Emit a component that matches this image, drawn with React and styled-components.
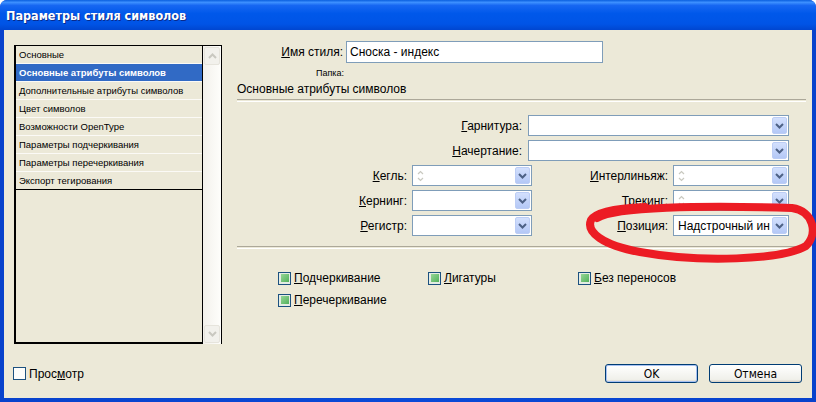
import React from "react";
import styled, { createGlobalStyle } from "styled-components";

const GlobalStyle = createGlobalStyle`
  html, body {
    margin: 0;
    padding: 0;
    background: #ffffff;
  }
  body {
    font-family: "Liberation Sans", Arial, sans-serif;
    font-size: 12px;
    color: #000;
  }
`;

const Window = styled.div`
  position: relative;
  width: 816px;
  height: 402px;
  display: flex;
  flex-direction: column;
  background: #0a3fd1;
  border-radius: 7px 7px 0 0;
  overflow: hidden;
`;

const TitleBar = styled.div`
  height: 30px;
  flex: none;
  display: flex;
  align-items: center;
  padding-left: 6px;
  background: linear-gradient(
    to bottom,
    #0a5fdf 0%,
    #3d90ff 8%,
    #1767f2 18%,
    #0058ea 45%,
    #0054e6 80%,
    #0046d0 100%
  );
  color: #fff;
  font-family: "DejaVu Sans Condensed", "Liberation Sans", sans-serif;
  font-weight: bold;
  font-size: 12.5px;
  text-shadow: 1px 1px 0 #0a2a8a;
`;

const Frame = styled.div`
  flex: 1;
  display: flex;
  padding: 0 4px 4px 4px;
  background: linear-gradient(to right, #0842cc, #0a4ad8 50%, #0842cc);
`;

const Content = styled.div`
  flex: 1;
  display: flex;
  flex-direction: column;
  background: #ece9d8;
`;

const Main = styled.div`
  height: 313px;
  display: flex;
`;

/* ---------- left list ---------- */

const ListPanel = styled.div`
  margin: 15px 0 0 10px;
  width: 208px;
  height: 299px;
  box-sizing: border-box;
  display: flex;
  border-top: 1px solid #000;
  border-left: 2px solid #000;
`;

const List = styled.div`
  width: 187px;
  display: flex;
  flex-direction: column;
  border-right: 1px solid #000;
  border-bottom: 2px solid #000;
`;

const ListItem = styled.div`
  height: 18px;
  box-sizing: border-box;
  display: flex;
  align-items: center;
  padding-left: 3px;
  font-size: 9.5px;
  white-space: nowrap;
  border-bottom: 1px solid ${(p) => (p.$last ? "#000" : "#fbfaf6")};
  background: ${(p) => (p.$selected ? "#316ac5" : "transparent")};
  color: ${(p) => (p.$selected ? "#fff" : "#000")};
  font-weight: ${(p) => (p.$selected ? "bold" : "normal")};
`;

const ScrollBar = styled.div`
  width: 18px;
  display: flex;
  flex-direction: column;
  justify-content: space-between;
  background: linear-gradient(to right, #f3f1ec, #fefefb);
  border-right: 1px solid #000;
`;

const ScrollBtn = styled.div`
  height: 16px;
  margin: 1px;
  display: flex;
  align-items: center;
  justify-content: center;
  border: 1px solid #e6e4dc;
  border-radius: 2px;
  background: #f2f1ec;
`;

/* ---------- right side ---------- */

const Right = styled.div`
  margin-left: 15px;
  width: 569px;
  padding-top: 11px;
  display: flex;
  flex-direction: column;
`;

const NameRow = styled.div`
  display: flex;
  align-items: center;
  gap: 3px;
`;

const Label = styled.span`
  width: ${(p) => p.$width || "auto"};
  flex: none;
  text-align: right;
  white-space: nowrap;
  font-size: 12px;
`;

const TextInput = styled.div`
  width: 257px;
  height: 22px;
  box-sizing: border-box;
  border: 1px solid #7f9db9;
  background: #fff;
  display: flex;
  align-items: center;
  padding-left: 3px;
  font-size: 12px;
`;

const FolderLabel = styled.div`
  width: 107px;
  margin-top: 4px;
  height: 12px;
  text-align: right;
  font-size: 9px;
  line-height: 12px;
`;

const SectionTitle = styled.div`
  margin-top: 3px;
  font-size: 12px;
  line-height: 15px;
`;

const Divider = styled.div`
  margin-top: ${(p) => p.$top || 0}px;
  height: 1px;
  border-top: 1px solid #aca899;
  border-bottom: 1px solid #fff;
`;

const Fields = styled.div`
  margin-top: 13px;
  display: flex;
  flex-direction: column;
  gap: 4px;
`;

const FullRow = styled.div`
  display: flex;
  align-items: center;
  gap: 6px;
`;

const HalfRow = styled.div`
  display: grid;
  grid-template-columns: 170px 120px 131px 116px;
  column-gap: 5px;
  align-items: center;
`;

const Combo = styled.div`
  width: ${(p) => p.$width}px;
  height: 21px;
  box-sizing: border-box;
  border: 1px solid #7f9db9;
  background: #fff;
  display: flex;
  align-items: stretch;
  padding: 1px;
`;

const Spin = styled.div`
  width: 13px;
  display: flex;
  flex-direction: column;
  align-items: center;
  justify-content: center;
`;

const ComboValue = styled.div`
  flex: 1;
  display: flex;
  align-items: center;
  padding-left: 3px;
  font-size: 12px;
  white-space: nowrap;
  overflow: hidden;
`;

const DropBtn = styled.div`
  width: 15px;
  flex: none;
  box-sizing: border-box;
  display: flex;
  align-items: center;
  justify-content: center;
  border: 1px solid #bccdf5;
  border-radius: 2px;
  background: linear-gradient(to bottom, #d3e0fd, #b4c8f6);
`;

const Checks = styled.div`
  margin-top: 22px;
  padding-left: 41px;
  display: grid;
  grid-template-columns: 150px 150px auto;
  row-gap: 8px;
`;

const CheckItem = styled.label`
  display: flex;
  align-items: center;
  gap: 3px;
  font-size: 12px;
  height: 14px;
`;

const Box = styled.span`
  width: 13px;
  height: 13px;
  box-sizing: border-box;
  flex: none;
  border: 1px solid #1c5180;
  background: ${(p) => (p.$mixed ? "#e4ece4" : "#fdfdfb")};
  display: flex;
  align-items: center;
  justify-content: center;
  &::after {
    content: "";
    display: ${(p) => (p.$mixed ? "block" : "none")};
    width: 8px;
    height: 8px;
    background: linear-gradient(135deg, #96d696, #52b15c);
  }
`;

const Footer = styled.div`
  margin-top: 21px;
  height: 19px;
  display: flex;
  align-items: center;
  justify-content: space-between;
  padding: 0 10px 0 9px;
`;

const Buttons = styled.div`
  display: flex;
  gap: 11px;
`;

const Button = styled.div`
  width: 93px;
  height: 19px;
  box-sizing: border-box;
  display: flex;
  align-items: center;
  justify-content: center;
  border: 1px solid #003c74;
  border-radius: 3px;
  background: linear-gradient(to bottom, #ffffff, #f0f0ea 85%, #d6d0c5);
  box-shadow: ${(p) => (p.$default ? "inset 0 0 0 1px #a7c1f2" : "none")};
  font-family: "DejaVu Sans Condensed", "Liberation Sans", sans-serif;
  font-size: 12px;
`;

const Annotation = styled.svg`
  position: absolute;
  left: 0;
  top: 0;
  pointer-events: none;
`;

const Chevron = ({ up, color = "#4d6185" }) => (
  <svg width="9" height="6" viewBox="0 0 9 6">
    <path
      d={up ? "M1 5 L4.5 1.5 L8 5" : "M1 1 L4.5 4.5 L8 1"}
      fill="none"
      stroke={color}
      strokeWidth="2"
    />
  </svg>
);

const SpinArrows = () => (
  <Spin>
    <svg width="7" height="14" viewBox="0 0 7 14">
      <path d="M1 5 L3.5 2.5 L6 5" fill="none" stroke="#c9c9c0" strokeWidth="1.2" />
      <path d="M1 9 L3.5 11.5 L6 9" fill="none" stroke="#c9c9c0" strokeWidth="1.2" />
    </svg>
  </Spin>
);

// text with an underlined access key
const Acc = ({ text, at = 0 }) => (
  <span>
    {text.slice(0, at)}
    <u>{text[at]}</u>
    {text.slice(at + 1)}
  </span>
);

const ComboBox = ({ width, spin, value }) => (
  <Combo $width={width}>
    {spin && <SpinArrows />}
    <ComboValue>{value}</ComboValue>
    <DropBtn>
      <Chevron />
    </DropBtn>
  </Combo>
);

const listItems = [
  "Основные",
  "Основные атрибуты символов",
  "Дополнительные атрибуты символов",
  "Цвет символов",
  "Возможности OpenType",
  "Параметры подчеркивания",
  "Параметры перечеркивания",
  "Экспорт тегирования",
];

const halfRows = [
  { left: "Кегль:", leftSpin: true, right: "Интерлиньяж:", rightSpin: true },
  { left: "Кернинг:", right: "Трекинг:", rightSpin: true },
  { left: "Регистр:", right: "Позиция:", rightValue: "Надстрочный ин" },
];

const checks = ["Подчеркивание", "Лигатуры", "Без переносов", "Перечеркивание"];

export default function App() {
  return (
    <>
      <GlobalStyle />
      <Window>
        <TitleBar>Параметры стиля символов</TitleBar>
        <Frame>
          <Content>
            <Main>
              <ListPanel>
                <List>
                  {listItems.map((item, i) => (
                    <ListItem
                      key={item}
                      $selected={i === 1}
                      $last={i === listItems.length - 1}
                    >
                      {item}
                    </ListItem>
                  ))}
                </List>
                <ScrollBar>
                  <ScrollBtn>
                    <Chevron up color="#c9c8c0" />
                  </ScrollBtn>
                  <ScrollBtn>
                    <Chevron color="#c9c8c0" />
                  </ScrollBtn>
                </ScrollBar>
              </ListPanel>

              <Right>
                <NameRow>
                  <Label $width="106px">
                    <Acc text="Имя стиля:" />
                  </Label>
                  <TextInput>Сноска - индекс</TextInput>
                </NameRow>
                <FolderLabel>Папка:</FolderLabel>
                <SectionTitle>Основные атрибуты символов</SectionTitle>
                <Divider $top={2} />

                <Fields>
                  <FullRow>
                    <Label $width="285px">
                      <Acc text="Гарнитура:" />
                    </Label>
                    <ComboBox width={261} />
                  </FullRow>
                  <FullRow>
                    <Label $width="285px">
                      <Acc text="Начертание:" />
                    </Label>
                    <ComboBox width={261} />
                  </FullRow>
                  {halfRows.map((row) => (
                    <HalfRow key={row.left}>
                      <Label>
                        <Acc text={row.left} />
                      </Label>
                      <ComboBox width={120} spin={row.leftSpin} />
                      <Label>
                        <Acc text={row.right} />
                      </Label>
                      <ComboBox
                        width={116}
                        spin={row.rightSpin}
                        value={row.rightValue}
                      />
                    </HalfRow>
                  ))}
                </Fields>

                <Divider $top={10} />

                <Checks>
                  {checks.map((c) => (
                    <CheckItem key={c}>
                      <Box $mixed />
                      <Acc text={c} />
                    </CheckItem>
                  ))}
                </Checks>
              </Right>
            </Main>

            <Footer>
              <CheckItem>
                <Box />
                <Acc text="Просмотр" at={4} />
              </CheckItem>
              <Buttons>
                <Button $default>OK</Button>
                <Button>Отмена</Button>
              </Buttons>
            </Footer>
          </Content>
        </Frame>

        <Annotation width="816" height="402" viewBox="0 0 816 402">
          <path
            d="M597 218 C615 207, 700 205, 792 208 C814 211, 818 234, 806 246 C782 260, 700 263, 640 252 C602 245, 586 232, 591 220 C596 211, 620 208, 645 207"
            fill="none"
            stroke="#ec1c24"
            strokeWidth="8"
            strokeLinecap="round"
            strokeLinejoin="round"
          />
        </Annotation>
      </Window>
    </>
  );
}
